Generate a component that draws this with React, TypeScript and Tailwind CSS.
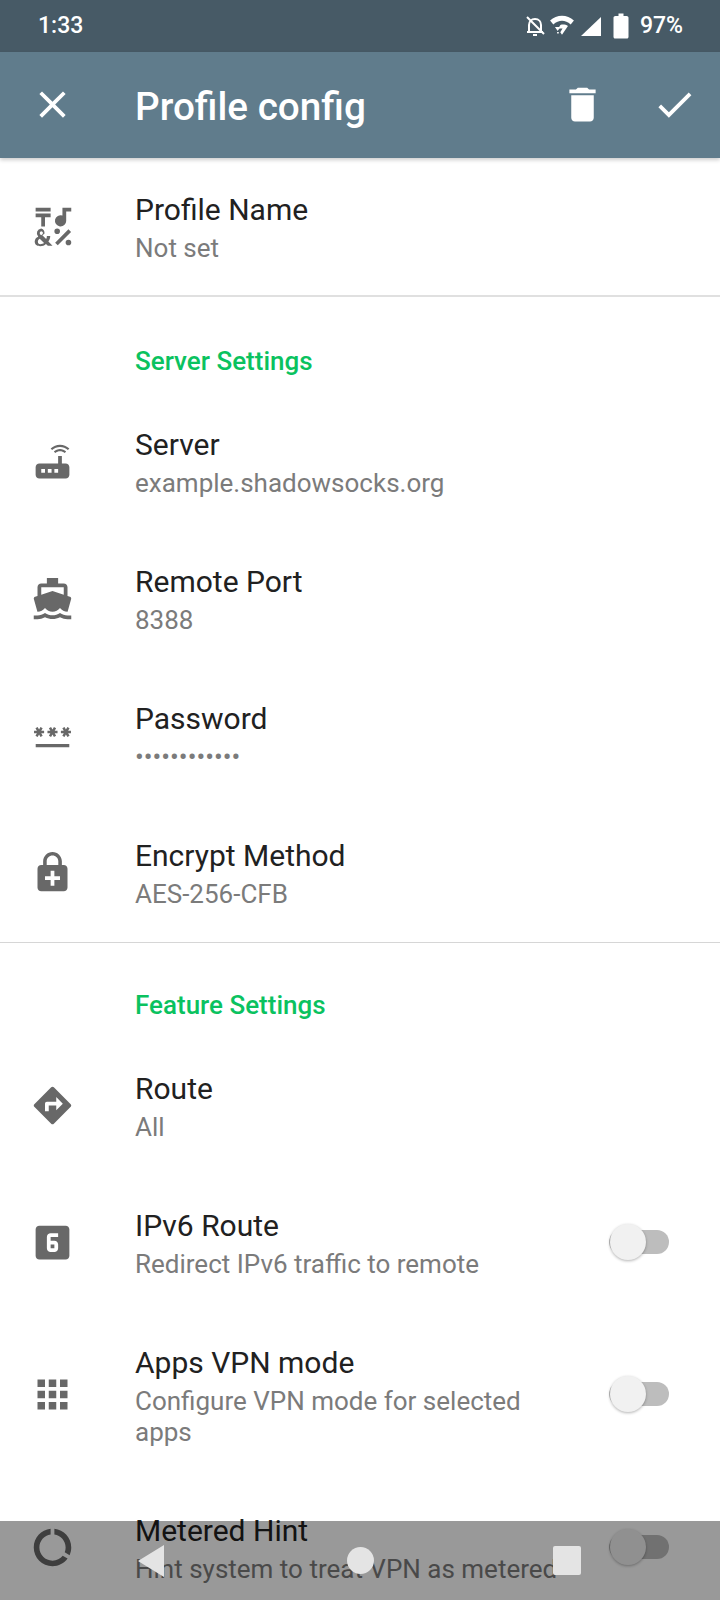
import React from "react";

const P = {
  close: "M19 6.41L17.59 5 12 10.59 6.41 5 5 6.41 10.59 12 5 17.59 6.41 19 12 13.41 17.59 19 19 17.59 13.41 12z",
  check: "M9 16.17L4.83 12l-1.42 1.41L9 19 21 7l-1.41-1.41z",
  del: "M6 19c0 1.1.9 2 2 2h8c1.1 0 2-.9 2-2V7H6v12zM19 4h-3.5l-1-1h-5l-1 1H5v2h14V4z",
  symbols: "M3 2h8v2H3zM3 5h8v2H8v5H6V7H3zM22 2v2h-2.7v5a3 3 0 1 1-2-2.83V2zM13.4 20.6l7.1-7.1 1.4 1.4-7.1 7.1zM14.5 16a1.5 1.5 0 1 0 0-3 1.5 1.5 0 0 0 0 3zM20.5 22a1.5 1.5 0 1 0 0-3 1.5 1.5 0 0 0 0 3zM6 13A2.6 2.6 0 0 0 4.4 17.4 3 3 0 0 0 2.5 20c0 1.7 1.3 2.5 3 2.5 1.2 0 2.2-.4 3-1.2l1 1H12l-2.2-2.3c.6-.9 1-1.9 1-3H9c0 .6-.1 1.2-.4 1.7l-2-2.1 1.1-.8A2.6 2.6 0 0 0 6 13zm0 1.5a1 1 0 0 1 .5 1.8l-.6.4-.4-.5a1 1 0 0 1 .5-1.7zM5.2 18.5l2.3 2.3c-.5.4-1.2.6-2 .6-.9 0-1.3-.5-1.3-1.3 0-.7.4-1.2 1-1.6z",
  router: "M20.2 5.9l.8-.8C19.6 3.7 17.8 3 16 3s-3.6.7-5 2.1l.8.8C13 4.8 14.5 4.2 16 4.2s3 .6 4.2 1.7zm-.9.8c-.9-.9-2.1-1.4-3.3-1.4s-2.4.5-3.3 1.4l.8.8c.7-.7 1.6-1 2.5-1 .9 0 1.8.3 2.5 1l.8-.8zM19 13h-2V9h-2v4H5c-1.1 0-2 .9-2 2v4c0 1.1.9 2 2 2h14c1.1 0 2-.9 2-2v-4c0-1.1-.9-2-2-2zM8 18H6v-2h2v2zm3.5 0h-2v-2h2v2zm3.5 0h-2v-2h2v2z",
  boat: "M20 21c-1.39 0-2.78-.47-4-1.32-2.44 1.71-5.56 1.71-8 0C6.78 20.53 5.39 21 4 21H2v2h2c1.38 0 2.74-.35 4-.99 2.52 1.29 5.48 1.29 8 0 1.26.65 2.62.99 4 .99h2v-2h-2zM3.95 19H4c1.6 0 3.02-.88 4-2 .98 1.12 2.4 2 4 2s3.02-.88 4-2c.98 1.12 2.4 2 4 2h.05l1.89-6.68c.08-.26.06-.54-.06-.78s-.34-.42-.6-.5L20 10.62V6c0-1.1-.9-2-2-2h-3V1H9v3H6c-1.1 0-2 .9-2 2v4.62l-1.29.42c-.26.08-.48.26-.6.5s-.15.52-.06.78L3.95 19zM6 6h12v3.97L12 8 6 9.97V6z",
  password: "M2 17h20v2H2zm1.15-4.05L4 11.47l.85 1.48 1.3-.75-.85-1.48H7v-1.5H5.3l.85-1.47L4.85 7 4 8.47 3.15 7l-1.3.75.85 1.47H1v1.5h1.7l-.85 1.48 1.3.75zm6.7-.75l1.3.75.85-1.48.85 1.48 1.3-.75-.85-1.48H15v-1.5h-1.7l.85-1.47-1.3-.75L12 8.47 11.15 7l-1.3.75.85 1.47H9v1.5h1.7l-.85 1.48zM23 9.22h-1.7l.85-1.47-1.3-.75L20 8.47 19.15 7l-1.3.75.85 1.47H17v1.5h1.7l-.85 1.48 1.3.75.85-1.48.85 1.48 1.3-.75-.85-1.48H23v-1.5z",
  lock: "M18 8h-1V6c0-2.76-2.24-5-5-5S7 3.24 7 6v2H6c-1.1 0-2 .9-2 2v10c0 1.1.9 2 2 2h12c1.1 0 2-.9 2-2V10c0-1.1-.9-2-2-2zM8.9 6c0-1.71 1.39-3.1 3.1-3.1s3.1 1.39 3.1 3.1v2H8.9V6zM16 16h-3v3h-2v-3H8v-2h3v-3h2v3h3v2z",
  route: "M21.71 11.29l-9-9c-.39-.39-1.02-.39-1.41 0l-9 9c-.39.39-.39 1.02 0 1.41l9 9c.39.39 1.02.39 1.41 0l9-9c.39-.38.39-1.01 0-1.41zM14 14.5V12h-4v3H8v-4c0-.55.45-1 1-1h5V7.5l3.5 3.5-3.5 3.5z",
  six: "M19 3H5c-1.1 0-2 .9-2 2v14c0 1.1.9 2 2 2h14c1.1 0 2-.9 2-2V5c0-1.1-.9-2-2-2zM15 9h-4v2h2c1.1 0 2 .9 2 2v2c0 1.1-.9 2-2 2h-2c-1.1 0-2-.9-2-2V9c0-1.1.9-2 2-2h4v2zm-4 4v2h2v-2h-2z",
  apps: "M4 8h4V4H4v4zm6 12h4v-4h-4v4zm-6 0h4v-4H4v4zm0-6h4v-4H4v4zm6 0h4v-4h-4v4zm6-10v4h4V4h-4zm-6 4h4V4h-4v4zm6 6h4v-4h-4v4zm0 6h4v-4h-4v4z",
  usage: "M13 2.05v3.03c3.39.49 6 3.39 6 6.92 0 .9-.18 1.75-.48 2.54l2.6 1.53c.56-1.24.88-2.62.88-4.07 0-5.18-3.95-9.45-9-9.95zM12 19c-3.87 0-7-3.13-7-7 0-3.53 2.61-6.43 6-6.92V2.05c-5.06.5-9 4.76-9 9.95 0 5.52 4.47 10 9.99 10 3.31 0 6.24-1.61 8.06-4.09l-2.6-1.53C16.17 17.98 14.21 19 12 19z",
};

function Icon({ d, className, vb = "0 0 24 24" }: { d: string; className?: string; vb?: string }) {
  return (
    <svg viewBox={vb} fill="currentColor" fillRule="evenodd" className={className}>
      <path d={d} />
    </svg>
  );
}

function Toggle() {
  return (
    <div className="relative mb-[4px] ml-[36px] mr-[51px] h-[24px] w-[60px] shrink-0 rounded-full bg-[#bdbdbd]">
      <div className="absolute left-[1px] top-[-6px] h-[36px] w-[36px] rounded-full bg-[#f1f1f1] shadow-[0_1px_3px_rgba(0,0,0,0.3)]" />
    </div>
  );
}

function Row({ icon, title, sub, toggle, first, vb }: { icon: string; title: string; sub: string; toggle?: boolean; first?: boolean; vb?: string }) {
  return (
    <div className={first ? "flex items-center pt-[33px] pb-[31px]" : "flex items-center py-[32px]"}>
      <Icon d={icon} vb={vb} className="mb-[3px] ml-[30px] mr-[60px] h-[45px] w-[45px] shrink-0 text-[#686868]" />
      <div className="min-w-0 flex-1">
        <div className="text-[30px] leading-[38px] text-[#212121]">{title}</div>
        <div className="mt-[4px] text-[26px] leading-[31px] text-[#7b7b7b]">{sub}</div>
      </div>
      {toggle && <Toggle />}
    </div>
  );
}

export default function App() {
  return (
    <div className="relative h-[1600px] w-[720px] overflow-hidden bg-white font-['Roboto',sans-serif]">
      <div className="flex h-[52px] items-center bg-[#475a66] pl-[38px] pr-[37px] text-white">
        <span className="text-[23px] font-medium">1:33</span>
        <div className="ml-auto flex items-center">
          <svg viewBox="0 0 24 24" fill="none" stroke="white" strokeWidth="2" className="h-[24px] w-[24px]">
            <path d="M6 17V11c0-3 2-6 6-6s6 3 6 6v6M4 18h16M10 21h4M4 3l17 17" />
          </svg>
          <svg viewBox="0 0 24 24" fill="white" className="ml-[2px] h-[26px] w-[26px]">
            <path d="M1 7c6-6 16-6 22 0l-3 3.5C15 6 9 6 4 10.5z" />
            <path d="M10.5 11c2.4-.7 5-.3 7 1L12 20l-1.6-2.2 2.1-3.5H8.5z" />
            <path d="M5.5 13h5L8 16.5zM7.5 17.5H9V19H7.5z" />
          </svg>
          <svg viewBox="0 0 24 24" fill="white" className="ml-[4px] h-[24px] w-[24px]">
            <path d="M22 3v19H2z" />
          </svg>
          <svg viewBox="0 0 24 24" fill="white" className="ml-[3px] h-[30px] w-[30px]">
            <path d="M14 2v2h2.5c.8 0 1.5.7 1.5 1.3v15.4c0 .7-.7 1.3-1.5 1.3h-9c-.8 0-1.5-.6-1.5-1.3V5.3C6 4.7 6.7 4 7.5 4H10V2z" />
          </svg>
          <span className="ml-[4px] text-[23px] font-medium">97%</span>
        </div>
      </div>
      <div className="relative z-10 flex h-[106px] items-center bg-[#607c8c] text-white shadow-[0_2px_4px_rgba(0,0,0,0.2)]">
        <Icon d={P.close} className="mb-[2px] ml-[30px] mr-[60px] h-[45px] w-[45px]" />
        <span className="mt-[4px] text-[38.7px] font-medium">Profile config</span>
        <Icon d={P.del} className="mb-[2px] ml-auto mr-[47px] h-[45px] w-[45px]" />
        <Icon d={P.check} className="mb-[2px] mr-[23px] h-[45px] w-[45px]" />
      </div>
      <Row first icon={P.symbols} title="Profile Name" sub="Not set" />
      <div className="h-[2px] bg-[#e0e0e0]" />
      <div className="pb-[17px] pl-[135px] pt-[48px] text-[26px] font-medium leading-[32px] text-[#0ac25f]">Server Settings</div>
      <Row icon={P.router} title="Server" sub="example.shadowsocks.org" />
      <Row icon={P.boat} title="Remote Port" sub="8388" />
      <Row icon={P.password} vb="-1.4 -1.4 26.8 26.8" title="Password" sub="••••••••••••" />
      <Row icon={P.lock} title="Encrypt Method" sub="AES-256-CFB" />
      <div className="h-px bg-[#d6d6d6]" />
      <div className="pb-[17px] pl-[135px] pt-[46px] text-[26px] font-medium leading-[32px] text-[#0ac25f]">Feature Settings</div>
      <Row icon={P.route} title="Route" sub="All" />
      <Row icon={P.six} title="IPv6 Route" sub="Redirect IPv6 traffic to remote" toggle />
      <Row icon={P.apps} title="Apps VPN mode" sub="Configure VPN mode for selected apps" toggle />
      <Row icon={P.usage} title="Metered Hint" sub="Hint system to treat VPN as metered" toggle />
      <div className="absolute inset-x-0 bottom-0 h-[79px] bg-black/40">
        <svg viewBox="0 0 26 32" className="absolute left-[138px] top-[24px] h-[32px] w-[26px]">
          <path d="M26 0v32L0 16z" fill="#e4e4e4" />
        </svg>
        <div className="absolute left-[347px] top-[26px] h-[27px] w-[27px] rounded-full bg-[#e4e4e4]" />
        <div className="absolute left-[553px] top-[25px] h-[29px] w-[28px] rounded-[2px] bg-[#e4e4e4]" />
      </div>
    </div>
  );
}
